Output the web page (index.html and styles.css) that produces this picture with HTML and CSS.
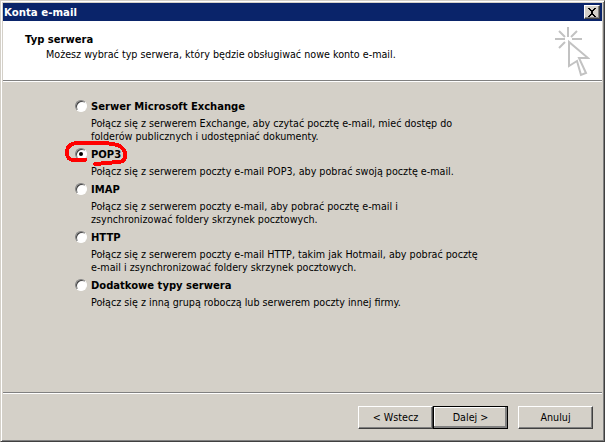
FILE: index.html
```html
<!DOCTYPE html>
<html lang="pl">
<head>
<meta charset="utf-8">
<title>Konta e-mail</title>
<link rel="stylesheet" href="styles.css">
</head>
<body>
<div class="window">
  <div class="titlebar">
    <span class="title">Konta e-mail</span>
    <span class="close"><svg width="10" height="9" viewBox="0 0 10 9"><path d="M1 0h2v1h1v1h2V1h1V0h2v1H8v1H7v1H6v3h1v1h1v1h1v1H7V8H6V7H4v1H3v1H1V8h1V7h1V6h1V3H3V2H2V1H1z" fill="#000"/></svg></span>
  </div>
  <header class="head">
    <div class="head-text">
      <div class="head-title">Typ serwera</div>
      <div class="head-sub">Możesz wybrać typ serwera, który będzie obsługiwać nowe konto e-mail.</div>
    </div>
    <svg class="head-icon" width="38" height="52" viewBox="0 0 38 52" fill="none" stroke="#c2c2c2" stroke-width="2">
      <path d="M16 1v10M3 13h10M20 13h10M7 5l6 6M25 5l-6 6M7 22l6-6"/>
      <path d="M17 16V40L25 35 29 49 34 47 27 32H36Z" fill="#fff"/>
    </svg>
  </header>
  <main class="body">
    <div class="options">
      <div class="option">
        <div class="opt-label"><span class="radio"></span><b>Serwer Microsoft Exchange</b></div>
        <p>Połącz się z serwerem Exchange, aby czytać pocztę e-mail, mieć dostęp do<br>folderów publicznych i udostępniać dokumenty.</p>
      </div>
      <div class="option">
        <div class="opt-label"><span class="radio checked"></span><b>POP3</b></div>
        <p>Połącz się z serwerem poczty e-mail POP3, aby pobrać swoją pocztę e-mail.</p>
      </div>
      <div class="option">
        <div class="opt-label"><span class="radio"></span><b>IMAP</b></div>
        <p>Połącz się z serwerem poczty e-mail, aby pobrać pocztę e-mail i<br>zsynchronizować foldery skrzynek pocztowych.</p>
      </div>
      <div class="option">
        <div class="opt-label"><span class="radio"></span><b>HTTP</b></div>
        <p>Połącz się z serwerem poczty e-mail HTTP, takim jak Hotmail, aby pobrać pocztę<br>e-mail i zsynchronizować foldery skrzynek pocztowych.</p>
      </div>
      <div class="option">
        <div class="opt-label"><span class="radio"></span><b>Dodatkowe typy serwera</b></div>
        <p>Połącz się z inną grupą roboczą lub serwerem poczty innej firmy.</p>
      </div>
    </div>
  </main>
  <footer class="foot">
    <div class="btn-pair">
      <button class="btn" type="button">&lt; Wstecz</button>
      <button class="btn default" type="button">Dalej &gt;</button>
    </div>
    <button class="btn" type="button">Anuluj</button>
  </footer>
</div>
<svg class="mark" width="66" height="28" viewBox="0 0 66 28" fill="none" stroke="#f00" stroke-width="4" stroke-linecap="round" stroke-linejoin="round" shape-rendering="crispEdges">
  <path d="M21 20 8 20Q2 18 3 11 4 4 12 3H36Q52 3 57 7 63 12 61 18 59 22 54 22L31 24"/>
</svg>
</body>
</html>
```
FILE: styles.css
```css
* { box-sizing: border-box; }
html, body { margin: 0; padding: 0; }
body {
  width: 605px;
  height: 442px;
  position: relative;
  overflow: hidden;
  font-family: "DejaVu Sans", sans-serif;
  font-size: 9.6px;
  color: #000;
  background: #d4d0c8;
}
.window {
  width: 605px;
  height: 442px;
  display: flex;
  flex-direction: column;
  padding: 2px;
  background: #d4d0c8;
  border: 1px solid #404040;
  border-top-color: #d4d0c8;
  border-left-color: #d4d0c8;
  box-shadow: inset 1px 1px 0 #fff, inset -1px -1px 0 #808080;
}
.titlebar {
  height: 18px;
  flex: none;
  display: flex;
  align-items: center;
  justify-content: space-between;
  padding: 0 2px 0 1px;
  background: #0a246a;
  color: #fff;
}
.title { font-weight: bold; font-size: 10.2px; }
.close {
  width: 16px;
  height: 14px;
  display: flex;
  align-items: center;
  justify-content: center;
  background: #d4d0c8;
  border: 1px solid;
  border-color: #fff #404040 #404040 #fff;
  box-shadow: inset -1px -1px 0 #808080;
}
.head {
  height: 60px;
  flex: none;
  display: flex;
  justify-content: space-between;
  background: #fff;
  border-bottom: 1px solid #808080;
  padding: 11px 12px 0 22px;
  box-shadow: 0 1px 0 #fff;
  position: relative;
}
.head-title { font-weight: bold; font-size: 10px; line-height: 13px; margin-top: 1px; }
.head-sub { margin: 2px 0 0 21px; line-height: 13px; }
.head-icon { margin-top: -6px; }
.body { flex: 1; padding: 18px 0 0 72px; border-bottom: 1px solid #808080; box-shadow: 0 1px 0 #fff; }
.option p { margin: 4px 0 4px 16px; line-height: 13px; }
.opt-label { display: flex; align-items: center; height: 14px; }
.opt-label b { font-weight: bold; font-size: 10px; margin-left: 4px; }
.radio {
  width: 12px;
  height: 12px;
  border-radius: 50%;
  background: #fff;
  border: 1px solid;
  border-color: #808080 #fff #fff #808080;
  box-shadow: inset 1px 1px 0 #404040;
  display: flex;
  align-items: center;
  justify-content: center;
}
.radio.checked::after { content: ""; width: 4px; height: 4px; border-radius: 50%; background: #000; }
.foot {
  height: 46px;
  flex: none;
  display: flex;
  justify-content: flex-end;
  gap: 10px;
  padding: 13px 9px 0 0;
}
.btn-pair { display: flex; }
.btn {
  width: 75px;
  height: 23px;
  padding: 0;
  font: 9.6px "DejaVu Sans", sans-serif;
  color: #000;
  background: #d4d0c8;
  border: 1px solid;
  border-color: #fff #404040 #404040 #fff;
  box-shadow: inset -1px -1px 0 #808080;
}
.btn.default { outline: 1px solid #000; outline-offset: -1px; box-shadow: inset -2px -2px 0 #808080, inset 1px 1px 0 #fff; }
.mark { position: absolute; left: 64px; top: 140px; }
```
